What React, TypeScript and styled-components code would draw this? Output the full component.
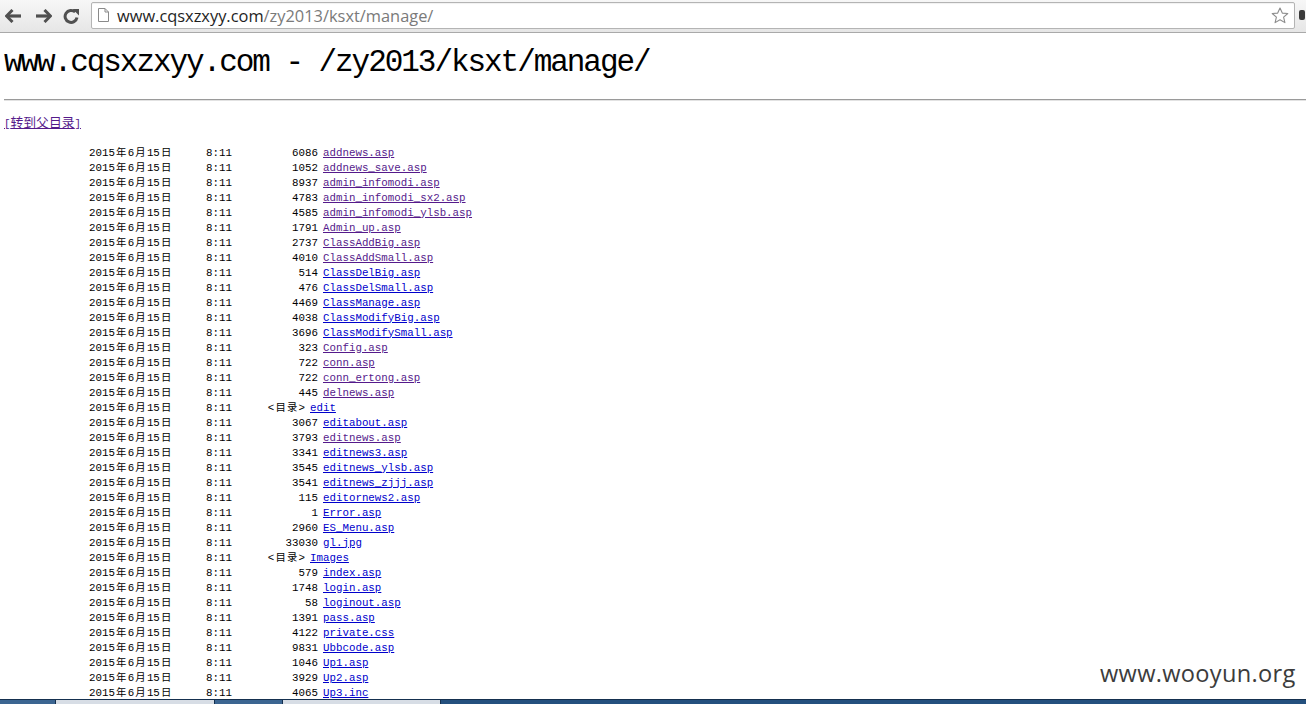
import React from "react";
import styled, { createGlobalStyle } from "styled-components";

const Global = createGlobalStyle`
  html, body { margin: 0; padding: 0; background: #fff; overflow: hidden; }
  #root { width: 1306px; height: 704px; }
`;

const Frame = styled.div`
  position: relative;
  width: 1306px;
  height: 704px;
  display: flex;
  flex-direction: column;
  overflow: hidden;
  background: #fff;
`;

const Toolbar = styled.div`
  height: 32px;
  flex: none;
  display: flex;
  align-items: center;
  padding-left: 5px;
  background: linear-gradient(#f7f7f7, #e6e6e6);
  border-bottom: 1px solid #a9a9a9;
  box-sizing: content-box;
`;

const NavButton = styled.div<{ $ml: number; $w: number }>`
  margin-left: ${(p) => p.$ml}px;
  width: ${(p) => p.$w}px;
  height: 18px;
  display: flex;
  align-items: center;
  justify-content: center;
  color: #505050;
`;

const Omnibox = styled.div`
  margin-left: 11px;
  width: 1204px;
  height: 27px;
  margin-top: -2px;
  box-sizing: border-box;
  border: 1px solid #b4b4b4;
  border-radius: 2px;
  background: #fff;
  display: flex;
  align-items: center;
  padding-left: 6px;
  box-shadow: inset 0 1px 1px rgba(0, 0, 0, 0.06);
`;

const UrlText = styled.span`
  margin-left: 8px;
  font-family: "Open Sans", "Liberation Sans", sans-serif;
  font-size: 16.4px;
  color: #1e1e1e;
  flex: 1;
  white-space: nowrap;
`;

const UrlPath = styled.span`
  color: #7a7a7a;
`;

const StarBox = styled.div`
  width: 20px;
  margin-right: 4px;
  display: flex;
  align-items: center;
  justify-content: center;
`;

const MenuStub = styled.div`
  margin-left: 4px;
  width: 6px;
  height: 10px;
  background: #3a3a3a;
  border-radius: 2px;
  margin-top: -2px;
`;

const Page = styled.div`
  flex: 1;
  padding-left: 4px;
  overflow: hidden;
`;

const Heading = styled.h1`
  margin: 12px 0 0 0;
  font-family: "Liberation Mono", monospace;
  font-weight: normal;
  font-size: 31px;
  letter-spacing: -2.05px;
  line-height: 36px;
  color: #000;
  white-space: nowrap;
`;

const Rule = styled.hr`
  margin: 18px 0 0 0;
  height: 0;
  border: none;
  border-top: 1px solid #9a9a9a;
  border-bottom: 1px solid #e2e2e2;
`;

const ParentLink = styled.a`
  display: inline-block;
  margin-top: 15px;
  height: 15px;
  line-height: 15px;
  font-family: "Liberation Mono", monospace;
  font-size: 10.8px;
  color: #551a8b;
  text-decoration: underline;
`;

const ParentHan = styled.span`
  font-family: "Noto Sans CJK SC", sans-serif;
  font-size: 12.8px;
  line-height: 1;
`;

const Han = styled.span`
  font-family: "Noto Sans CJK SC", sans-serif;
  font-size: 10.35px;
  letter-spacing: 1.2px;
  padding-left: 1.2px;
  line-height: 1;
`;

const Listing = styled.div`
  margin-top: 14px;
  display: flex;
  flex-direction: column;
`;

const Row = styled.div`
  height: 15px;
  display: flex;
  align-items: center;
  padding-left: 85px;
  font-family: "Liberation Mono", monospace;
  font-size: 10.8px;
  color: #000;
  white-space: nowrap;
`;

const DateCell = styled.span`
  width: 117px;
  flex: none;
`;

const TimeCell = styled.span`
  width: 26px;
  flex: none;
`;

const SizeCell = styled.span<{ $dir?: boolean }>`
  width: ${(p) => (p.$dir ? 73 : 86)}px;
  flex: none;
  text-align: right;
  margin-right: 5px;
`;

const FileLink = styled.a<{ $visited?: boolean }>`
  color: ${(p) => (p.$visited ? "#551a8b" : "#0000cc")};
  text-decoration: underline;
`;

const Watermark = styled.div`
  position: absolute;
  left: 1100px;
  top: 657px;
  font-family: "Open Sans", "DejaVu Sans", sans-serif;
  font-size: 23.6px;
  color: #3c3c3c;
  letter-spacing: 0.3px;
`;

const Taskbar = styled.div`
  position: absolute;
  left: 0;
  right: 0;
  bottom: 0;
  height: 4px;
  display: flex;
  border-top: 1px solid #15304f;
  background: #24507e;
`;

const TaskSeg = styled.div<{ $w: number; $light?: boolean }>`
  width: ${(p) => p.$w}px;
  flex: none;
  background: ${(p) => (p.$light ? "#d7dde5" : "#3b6591")};
  border-right: 1px solid #15304f;
`;

type Entry = { size?: string; name: string; dir?: boolean; visited?: boolean };

const entries: Entry[] = [
  { size: "6086", name: "addnews.asp", visited: true },
  { size: "1052", name: "addnews_save.asp", visited: true },
  { size: "8937", name: "admin_infomodi.asp", visited: true },
  { size: "4783", name: "admin_infomodi_sx2.asp", visited: true },
  { size: "4585", name: "admin_infomodi_ylsb.asp", visited: true },
  { size: "1791", name: "Admin_up.asp", visited: true },
  { size: "2737", name: "ClassAddBig.asp", visited: true },
  { size: "4010", name: "ClassAddSmall.asp", visited: true },
  { size: "514", name: "ClassDelBig.asp" },
  { size: "476", name: "ClassDelSmall.asp" },
  { size: "4469", name: "ClassManage.asp" },
  { size: "4038", name: "ClassModifyBig.asp" },
  { size: "3696", name: "ClassModifySmall.asp" },
  { size: "323", name: "Config.asp", visited: true },
  { size: "722", name: "conn.asp", visited: true },
  { size: "722", name: "conn_ertong.asp", visited: true },
  { size: "445", name: "delnews.asp", visited: true },
  { name: "edit", dir: true },
  { size: "3067", name: "editabout.asp" },
  { size: "3793", name: "editnews.asp", visited: true },
  { size: "3341", name: "editnews3.asp" },
  { size: "3545", name: "editnews_ylsb.asp" },
  { size: "3541", name: "editnews_zjjj.asp" },
  { size: "115", name: "editornews2.asp" },
  { size: "1", name: "Error.asp" },
  { size: "2960", name: "ES_Menu.asp" },
  { size: "33030", name: "gl.jpg" },
  { name: "Images", dir: true },
  { size: "579", name: "index.asp" },
  { size: "1748", name: "login.asp" },
  { size: "58", name: "loginout.asp" },
  { size: "1391", name: "pass.asp" },
  { size: "4122", name: "private.css" },
  { size: "9831", name: "Ubbcode.asp" },
  { size: "1046", name: "Up1.asp" },
  { size: "3929", name: "Up2.asp" },
  { size: "4065", name: "Up3.inc" },
];

const BackIcon = () => (
  <svg width="17" height="14" viewBox="0 0 17 14">
    <path d="M7.5 1 L1.5 7 L7.5 13" fill="none" stroke="currentColor" strokeWidth="3" strokeLinejoin="miter" />
    <path d="M2.5 7 H16" stroke="currentColor" strokeWidth="3.2" />
  </svg>
);

const ForwardIcon = () => (
  <svg width="17" height="14" viewBox="0 0 17 14">
    <path d="M9.5 1 L15.5 7 L9.5 13" fill="none" stroke="currentColor" strokeWidth="3" strokeLinejoin="miter" />
    <path d="M1 7 H14.5" stroke="currentColor" strokeWidth="3.2" />
  </svg>
);

const ReloadIcon = () => (
  <svg width="17" height="16" viewBox="0 0 17 16">
    <path d="M14 9.5 A6 6 0 1 1 12.2 4" fill="none" stroke="currentColor" strokeWidth="3" />
    <path d="M9.5 1 L16 1 L16 7.5 Z" fill="currentColor" />
  </svg>
);

const PageIcon = () => (
  <svg width="11" height="14" viewBox="0 0 11 14">
    <path d="M0.5 0.5 H7 L10.5 4 V13.5 H0.5 Z" fill="#fff" stroke="#8a8a8a" strokeWidth="1" />
    <path d="M7 0.5 V4 H10.5" fill="none" stroke="#8a8a8a" strokeWidth="1" />
  </svg>
);

const StarIcon = () => (
  <svg width="18" height="17" viewBox="0 0 18 17">
    <path
      d="M9 1 L11.3 6.1 L16.8 6.5 L12.6 10.1 L13.9 15.6 L9 12.7 L4.1 15.6 L5.4 10.1 L1.2 6.5 L6.7 6.1 Z"
      fill="none"
      stroke="#8c8c8c"
      strokeWidth="1.1"
      strokeLinejoin="round"
    />
  </svg>
);

const DateText = () => (
  <>
    2015<Han>年</Han>6<Han>月</Han>15<Han>日</Han>
  </>
);

export default function App() {
  return (
    <Frame>
      <Global />
      <Toolbar>
        <NavButton $ml={0} $w={17}>
          <BackIcon />
        </NavButton>
        <NavButton $ml={13} $w={17}>
          <ForwardIcon />
        </NavButton>
        <NavButton $ml={11} $w={17}>
          <ReloadIcon />
        </NavButton>
        <Omnibox>
          <PageIcon />
          <UrlText>
            www.cqsxzxyy.com<UrlPath>/zy2013/ksxt/manage/</UrlPath>
          </UrlText>
          <StarBox>
            <StarIcon />
          </StarBox>
        </Omnibox>
        <MenuStub />
      </Toolbar>
      <Page>
        <Heading>www.cqsxzxyy.com - /zy2013/ksxt/manage/</Heading>
        <Rule />
        <ParentLink href="#">
          [<ParentHan>转到父目录</ParentHan>]
        </ParentLink>
        <Listing>
          {entries.map((e, i) => (
            <Row key={i}>
              <DateCell>
                <DateText />
              </DateCell>
              <TimeCell>8:11</TimeCell>
              <SizeCell $dir={e.dir}>
                {e.dir ? (
                  <>
                    &lt;<Han>目录</Han>&gt;
                  </>
                ) : (
                  e.size
                )}
              </SizeCell>
              <FileLink href="#" $visited={e.visited}>
                {e.name}
              </FileLink>
            </Row>
          ))}
        </Listing>
      </Page>
      <Watermark>www.wooyun.org</Watermark>
      <Taskbar>
        <TaskSeg $w={55} />
        <TaskSeg $w={158} $light />
        <TaskSeg $w={67} />
        <TaskSeg $w={157} $light />
      </Taskbar>
    </Frame>
  );
}
